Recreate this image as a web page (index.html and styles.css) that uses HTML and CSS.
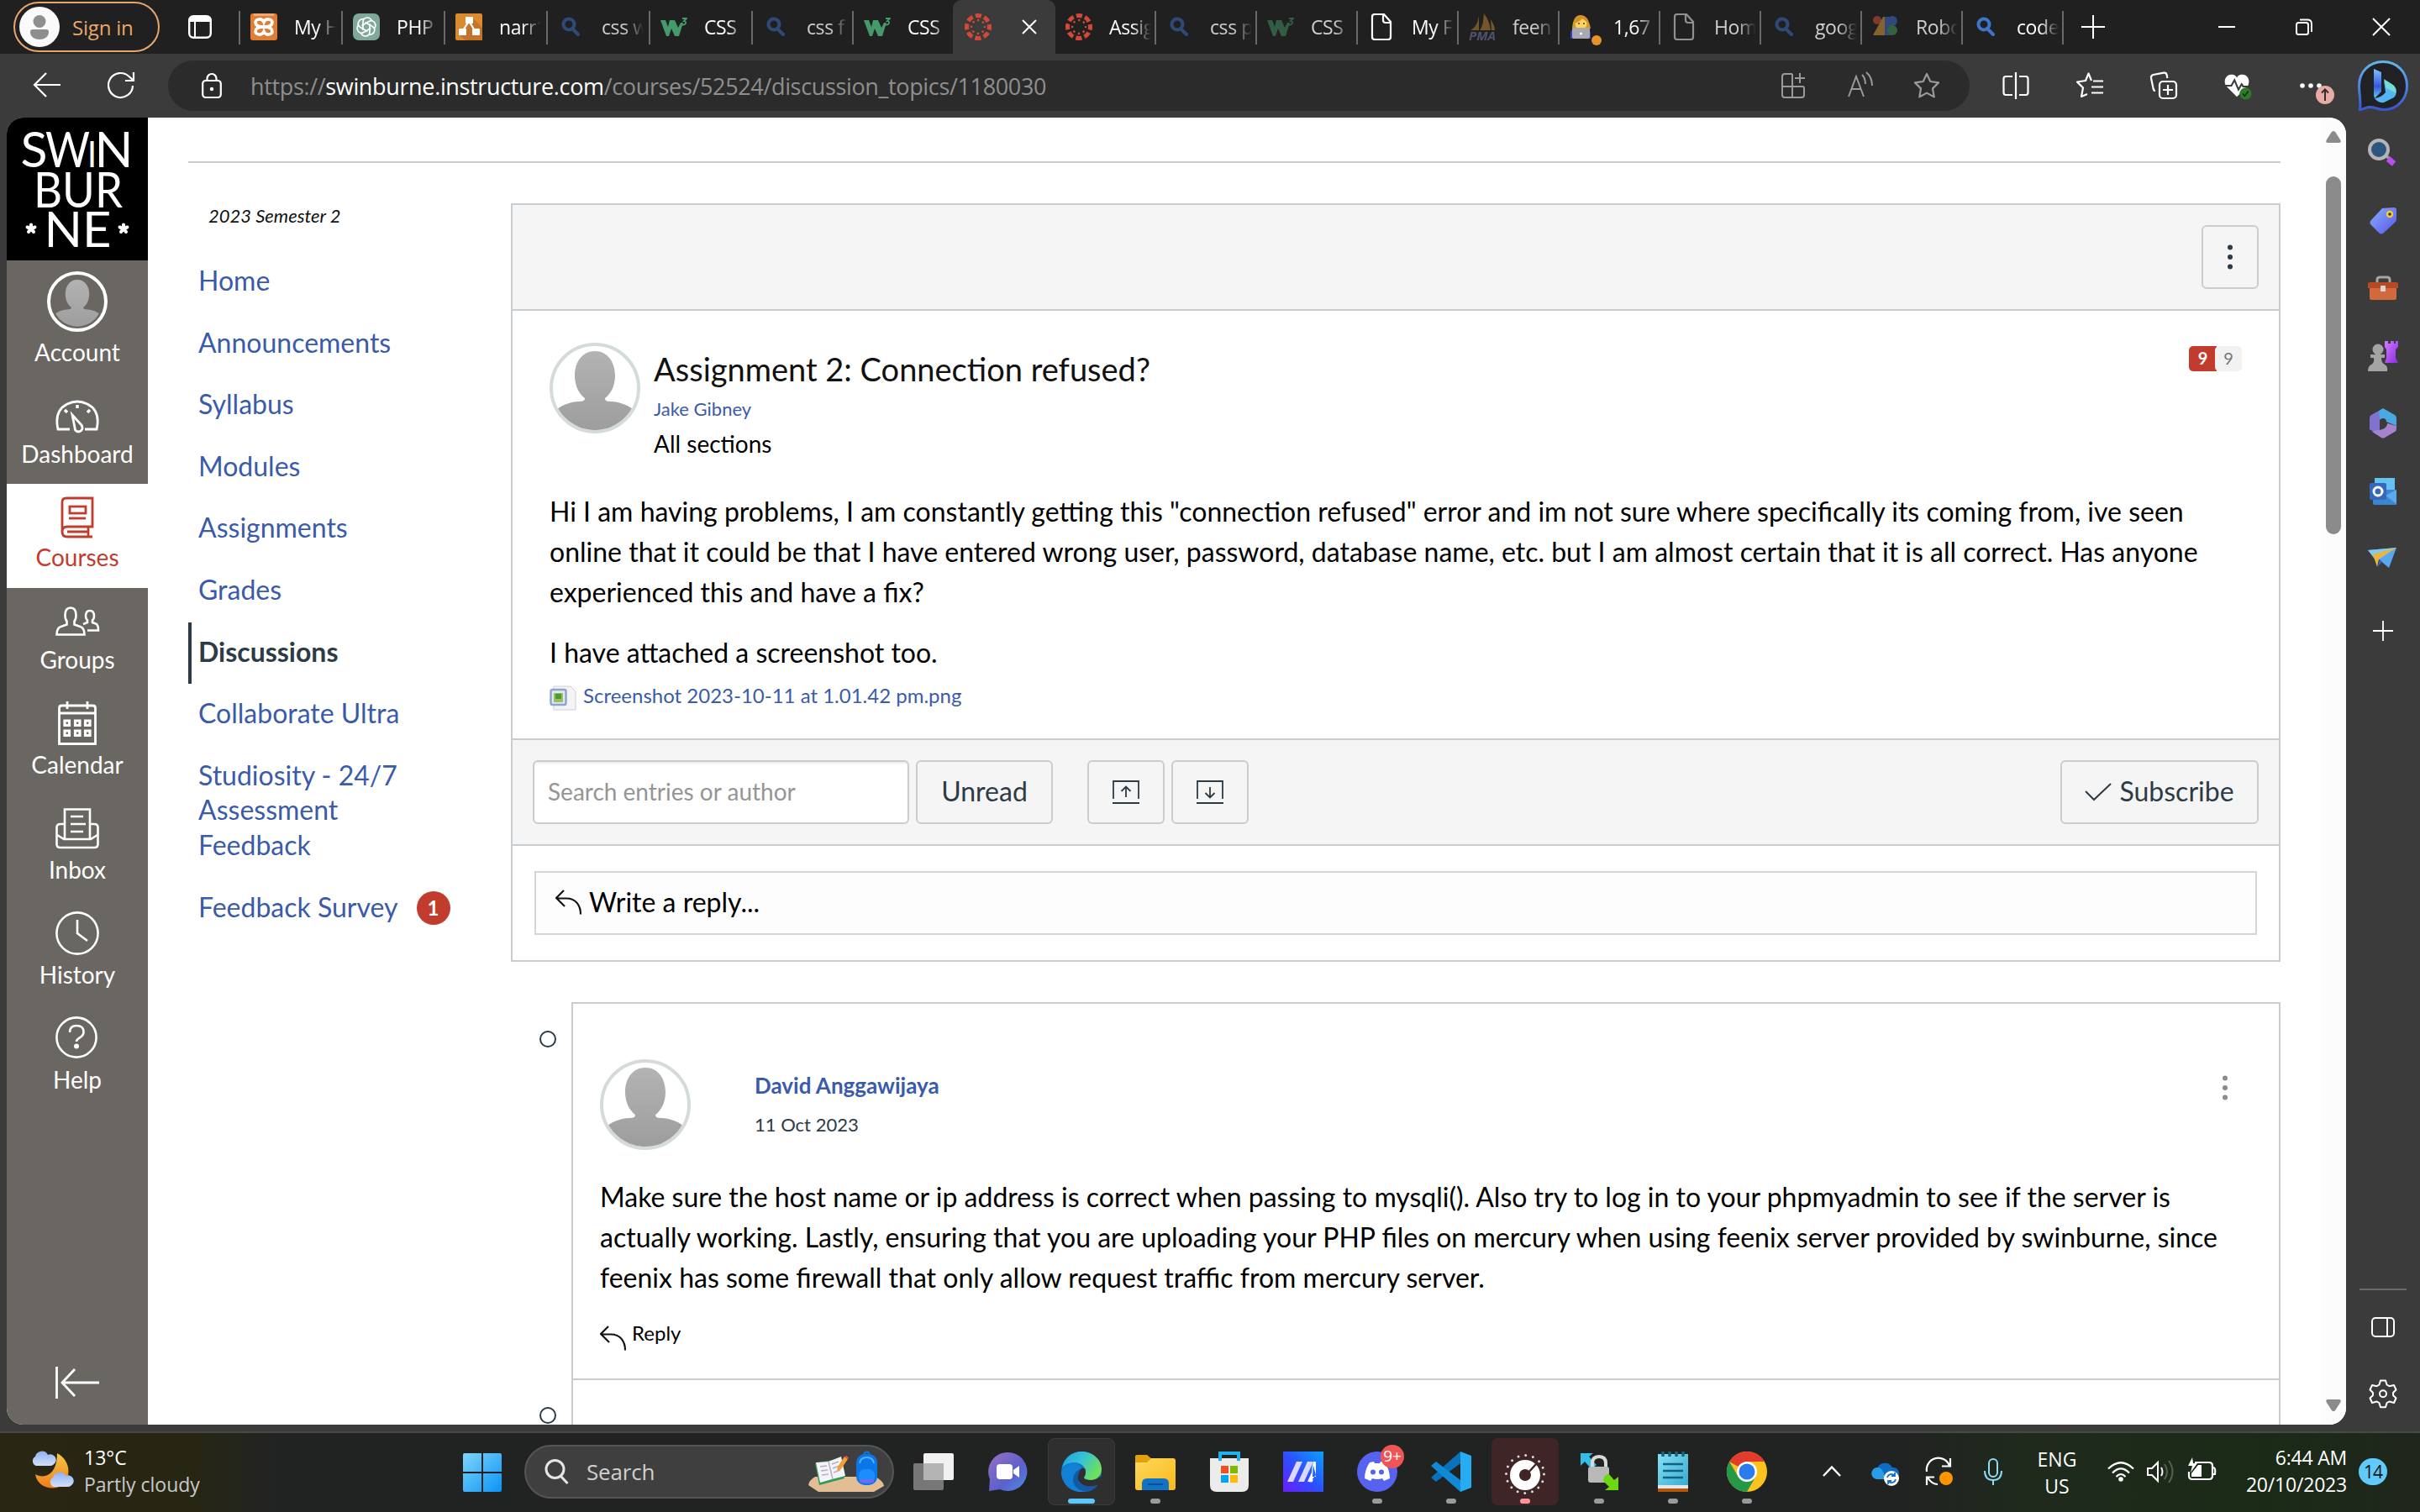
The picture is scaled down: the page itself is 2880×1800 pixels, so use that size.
FILE: index.html
```html
<!DOCTYPE html>
<html lang="en">
<head>
<meta charset="utf-8">
<title>Assignment 2: Connection refused?</title>
<link rel="stylesheet" href="styles.css">
</head>
<body>
<svg class="defs" width="0" height="0">
  <defs>
    <linearGradient id="gPerson" x1="0" y1="0" x2="0" y2="1"><stop offset="0" stop-color="#b3b3b3"/><stop offset="1" stop-color="#9c9c9c"/></linearGradient>
    <linearGradient id="gBlue" x1="0" y1="0" x2="1" y2="1"><stop offset="0" stop-color="#7fd6fb"/><stop offset="1" stop-color="#0a93f5"/></linearGradient>
    <linearGradient id="gBing" x1="0" y1="0" x2="0" y2="1"><stop offset="0" stop-color="#63b5e8"/><stop offset="1" stop-color="#3a56d0"/></linearGradient>
    <linearGradient id="gBingB" x1="0" y1="0" x2="0" y2="1"><stop offset="0" stop-color="#7cc4ff"/><stop offset=".6" stop-color="#3a55e0"/><stop offset="1" stop-color="#5ccff0"/></linearGradient>
    <linearGradient id="gTag" x1="0" y1="0" x2="1" y2="1"><stop offset="0" stop-color="#86b0fb"/><stop offset="1" stop-color="#5a55ec"/></linearGradient>
    <linearGradient id="gPurple" x1="0" y1="0" x2="1" y2="1"><stop offset="0" stop-color="#d479ff"/><stop offset="1" stop-color="#8a2be2"/></linearGradient>
    <linearGradient id="gTeams" x1="0" y1="0" x2="1" y2="1"><stop offset="0" stop-color="#9a6fc4"/><stop offset=".6" stop-color="#5c60cc"/><stop offset="1" stop-color="#4b8fe6"/></linearGradient>
    <linearGradient id="gEdge" x1="0" y1="0" x2="1" y2=".5"><stop offset="0" stop-color="#1d9de0"/><stop offset=".5" stop-color="#35c3d6"/><stop offset="1" stop-color="#6fe05a"/></linearGradient>
    <linearGradient id="gEdge2" x1="0" y1="0" x2="0" y2="1"><stop offset="0" stop-color="#1585d8"/><stop offset="1" stop-color="#0c59a4"/></linearGradient>
    <linearGradient id="gFolder" x1="0" y1="0" x2="1" y2="1"><stop offset="0" stop-color="#ffd95c"/><stop offset="1" stop-color="#f9b81b"/></linearGradient>
    <linearGradient id="gAsus" x1="0" y1="1" x2="1" y2="0"><stop offset="0" stop-color="#6a1cff"/><stop offset=".5" stop-color="#2b51ff"/><stop offset="1" stop-color="#0aa2ff"/></linearGradient>
    <linearGradient id="gMoon" x1="0" y1="0" x2="0" y2="1"><stop offset="0" stop-color="#f6c945"/><stop offset="1" stop-color="#ef7d1a"/></linearGradient>
    <linearGradient id="gCloud" x1="0" y1="0" x2="0" y2="1"><stop offset="0" stop-color="#8fb1f2"/><stop offset="1" stop-color="#d3e0fa"/></linearGradient>
    <linearGradient id="gNote" x1="0" y1="0" x2="1" y2="1"><stop offset="0" stop-color="#86e0f5"/><stop offset="1" stop-color="#34a8cc"/></linearGradient>
    <symbol id="person" viewBox="0 0 108 108">
      <clipPath id="pc"><circle cx="54" cy="54" r="50"/></clipPath>
      <g clip-path="url(#pc)" fill="url(#gPerson)"><path d="M54 10c15 0 24 13 24 29 0 12-5 22-12 27 0 3 2 4 8 4 14 1 26 7 30 16v24H4V86c4-9 16-15 30-16 6 0 8-1 8-4-7-5-12-15-12-27 0-16 9-29 24-29z"/></g>
    </symbol>
    <symbol id="bing-q" viewBox="0 0 32 32"><circle cx="13" cy="13" r="6.5" fill="none" stroke-width="4" stroke="currentColor"/><path d="M17 18l7 7" stroke="currentColor" stroke-width="4" stroke-linecap="round"/></symbol>
    <symbol id="w3" viewBox="0 0 32 32"><path d="M0 8h6l3 8 2-8h6l4 9 3-6 3 0-5 16h-5l-4-9-3 9H7z" fill="#46996a"/><path d="M26 6h5l-3 3c3 0 3 5-2 4.500" fill="none" stroke="#46996a" stroke-width="1.800"/></symbol>
    <symbol id="canvas" viewBox="0 0 32 32">
      <circle cx="16" cy="16" r="13.500" fill="none" stroke="#d24a37" stroke-width="5" stroke-dasharray="7.200 3.400" stroke-dashoffset="3.600"/>
      <circle cx="16" cy="16" r="8" fill="none" stroke="#d24a37" stroke-width="2.400" stroke-dasharray="2.400 3.883" stroke-dashoffset="1.200"/>
    </symbol>
    <symbol id="doc" viewBox="0 0 32 32"><path d="M5 4q0-3 3-3h11l8 9v18q0 3-3 3H8q-3 0-3-3zM18 1v7q0 3 3 3h6" fill="none" stroke="currentColor" stroke-width="2.200"/></symbol>
    <symbol id="reply" viewBox="0 0 32 30"><path d="M10 1L1 10l10 10M1.500 10.500H13c11 0 17 8 17 19" fill="none" stroke="#111" stroke-width="2.200"/></symbol>
  </defs>
</svg>

<header class="tabstrip">
  <div class="signin"><svg viewBox="0 0 48 48" width="48" height="48"><circle cx="24" cy="24" r="24" fill="#fafafa"/><circle cx="24" cy="17.500" r="7.500" fill="#8e8e8e"/><path d="M13 30q0-3 3-3h16q3 0 3 3c0 12-22 12-22 0z" fill="#8e8e8e"/></svg><span>Sign in</span></div>
  <svg class="tabmenu" viewBox="0 0 28 28" width="28" height="28"><rect x="1.200" y="1.200" width="25.600" height="25.600" rx="5" fill="none" stroke="#fff" stroke-width="2.400"/><path d="M1 8V6q0-5 5-5h16q5 0 5 5v2z" fill="#fff"/><path d="M8 8v19" stroke="#fff" stroke-width="2"/></svg>
  <div class="tabs">
    <div class="tab"><svg class="fav" viewBox="0 0 32 32"><rect width="32" height="32" rx="3" fill="#df7d35"/><path d="M4 0h24v3H4z" fill="#eda96f"/><g fill="none" stroke="#fff" stroke-width="3.600"><path d="M16 16c-6 0-10-1.500-10-5.500S14 5 16 10.500C18 5 26 6.500 26 10.500S22 16 16 16z"/><path d="M16 16c-6 0-10 1.500-10 5.500S14 27 16 21.500C18 27 26 25.500 26 21.500S22 16 16 16z"/></g></svg><span>My H</span></div>
    <div class="tab"><svg class="fav" viewBox="0 0 32 32"><rect width="32" height="32" rx="7" fill="#7fa89b"/><g fill="none" stroke="#fff" stroke-width="1.700"><path id="pt" d="M12 20V10.500Q12 5 17 5q4 0 5.500 4"/><use href="#pt" transform="rotate(60 16 16)"/><use href="#pt" transform="rotate(120 16 16)"/><use href="#pt" transform="rotate(180 16 16)"/><use href="#pt" transform="rotate(240 16 16)"/><use href="#pt" transform="rotate(300 16 16)"/></g></svg><span>PHP</span></div>
    <div class="tab"><svg class="fav" viewBox="0 0 32 32"><rect width="32" height="32" rx="2" fill="#da8a30"/><path d="M20 5l12 12v15H12l-8-7 12-12z" fill="#c47428"/><path d="M16 9L8 22M16 9l8 13" stroke="#fff" stroke-width="2.200"/><g fill="#fff"><rect x="12" y="4" width="9" height="8" rx="1"/><rect x="4" y="18" width="9" height="8" rx="1"/><rect x="20" y="18" width="9" height="8" rx="1"/></g></svg><span>narr1</span></div>
    <div class="tab asleep"><svg class="fav q"><use href="#bing-q"/></svg><span>css w</span></div>
    <div class="tab"><svg class="fav"><use href="#w3"/></svg><span>CSS</span></div>
    <div class="tab narrow asleep"><svg class="fav q"><use href="#bing-q"/></svg><span>css f</span></div>
    <div class="tab narrow"><svg class="fav"><use href="#w3"/></svg><span>CSS</span></div>
    <div class="tab active"><svg class="fav"><use href="#canvas"/></svg><svg class="x" viewBox="0 0 18 18"><path d="M1 1l16 16M17 1L1 17" stroke="#fff" stroke-width="2"/></svg></div>
    <div class="tab narrow first"><svg class="fav"><use href="#canvas"/></svg><span>Assig</span></div>
    <div class="tab narrow asleep"><svg class="fav q"><use href="#bing-q"/></svg><span>css p</span></div>
    <div class="tab narrow asleep"><svg class="fav"><use href="#w3"/></svg><span>CSS</span></div>
    <div class="tab narrow"><svg class="fav"><use href="#doc"/></svg><span>My F</span></div>
    <div class="tab narrow asleep"><svg class="fav pma" viewBox="0 0 32 32"><path d="M2 20C9 16 11 10 12 2v18zM13 20C18 13 17 6 18 0c6 8 7 14 8 20zM26 7c4 6 5 10 5 13h-4z" fill="#c98a38"/><text x="0" y="32" font-size="15" font-weight="700" font-style="italic" textLength="32" lengthAdjust="spacingAndGlyphs" fill="#8082b4">PMA</text></svg><span>feen</span></div>
    <div class="tab narrow"><svg class="fav" viewBox="0 0 32 32"><path d="M3 18Q4 2 13 2t12 16z" fill="#d99b2e"/><circle cx="13.500" cy="12" r="7" fill="#fbd65a"/><path d="M5 12Q8 2 14 3q8 0 9 9-4-3-8-6-3 4-10 6z" fill="#d58f2b"/><circle cx="11" cy="12" r="1" fill="#5c3b16"/><circle cx="17" cy="12" r="1" fill="#5c3b16"/><path d="M1 30V22q1-3 5-3h14q5 0 5 4v7z" fill="#3a3cc4"/><rect x="3" y="17" width="21" height="13" rx="2" fill="#a9a9b0"/><circle cx="13.500" cy="24" r="1.500" fill="#fff"/></svg><i class="dot"></i><span>1,67</span></div>
    <div class="tab narrow asleep"><svg class="fav"><use href="#doc"/></svg><span>Hom</span></div>
    <div class="tab narrow asleep"><svg class="fav q"><use href="#bing-q"/></svg><span>goog</span></div>
    <div class="tab narrow asleep"><svg class="fav" viewBox="0 0 32 32"><circle cx="6" cy="8" r="5" fill="#e0533d"/><path d="M13 4h6v22H1z" fill="#e9a63c"/><path d="M15 4h8v22h-8z" fill="#4070d8"/><circle cx="24" cy="9" r="6" fill="#4070d8"/><circle cx="24" cy="20" r="6" fill="#49a35a"/></svg><span>Robo</span></div>
    <div class="tab narrow last"><svg class="fav q"><use href="#bing-q"/></svg><span>code</span></div>
  </div>
  <svg class="newtab" viewBox="0 0 28 28" width="28" height="28"><path d="M14 0v28M0 14h28" stroke="#fff" stroke-width="2"/></svg>
  <div class="winbtns">
    <svg viewBox="0 0 20 20"><path d="M0 10h20" stroke="#fff" stroke-width="2"/></svg>
    <svg viewBox="0 0 20 20"><rect x="1" y="5" width="14" height="14" rx="2.500" fill="none" stroke="#fff" stroke-width="2"/><path d="M5 1.500h9q5 0 5 5V16" fill="none" stroke="#fff" stroke-width="1.800"/></svg>
    <svg viewBox="0 0 20 20"><path d="M0 0l20 20M20 0L0 20" stroke="#fff" stroke-width="2"/></svg>
  </div>
</header>

<div class="toolbar">
  <svg class="back" viewBox="0 0 32 32"><path d="M32 16H1M15 2L1 16l14 14" fill="none" stroke="#fff" stroke-width="2.200"/></svg>
  <svg class="reload" viewBox="0 0 32 32"><path d="M30 16A14.500 14.500 0 1 1 25.500 5l5 4.500M31 0v10H21" fill="none" stroke="#fff" stroke-width="2.200"/></svg>
  <div class="address">
    <svg class="lock" viewBox="0 0 24 30"><rect x="1.200" y="9" width="21.600" height="20" rx="3.500" fill="none" stroke="#fff" stroke-width="2.200"/><path d="M6.500 9V6.500a5.500 5.500 0 0 1 11 0V9" fill="none" stroke="#fff" stroke-width="2.200"/><circle cx="12" cy="19" r="2.200" fill="#fff"/></svg>
    <div class="url"><span class="scheme">https://</span><span class="host">swinburne.instructure.com</span><span class="path">/courses/52524/discussion_topics/1180030</span></div>
    <svg class="apps" viewBox="0 0 30 30"><g fill="none" stroke="#9a9a9a" stroke-width="2"><path d="M14 1H5Q2 1 2 4v22q0 3 3 3h20q3 0 3-3v-8q0-2-2-2H2M14 1v28"/><path d="M23 0v12M17 6h12"/></g></svg>
    <svg class="read" viewBox="0 0 30 32"><g fill="none" stroke="#9a9a9a" stroke-width="2"><path d="M1 29L10 5l9 24M4.500 20h11M17 3q4 4 4 11M22 0q7 6 7 16"/></g></svg>
    <svg class="star" viewBox="0 0 32 32"><path d="M16 2l4.300 9 9.700 1.400-7 7 1.700 10L16 24.600 7.300 29.400l1.700-10-7-7 9.700-1.400z" fill="none" stroke="#9a9a9a" stroke-width="2.200" stroke-linejoin="round"/></svg>
  </div>
  <div class="tools">
    <svg viewBox="0 0 32 32"><path d="M12 5H4Q1.500 5 1.500 8v16Q1.500 27 4 27h8M20 5h8q2.500 0 2.500 3v16q0 3-2.500 3h-8M16 0v32" fill="none" stroke="#fff" stroke-width="2.200"/></svg>
    <svg viewBox="0 0 32 32"><path d="M18 10.500L14.500 2 11 10.500 1 12l7 7-2 10.500 7-3M20 11h12M18 18h14M18 25h14" transform="translate(0 -.500)" fill="none" stroke="#fff" stroke-width="2.200" stroke-linejoin="round"/></svg>
    <svg viewBox="0 0 32 32"><g fill="none" stroke="#fff" stroke-width="2.200"><path d="M6 22Q4 22 3.500 19L1 7q-.500-3 2.500-4L16 .700q3-.500 3.700 2.500l.600 3.800"/><rect x="11" y="11" width="20" height="20" rx="4"/><path d="M21 15v12M15 21h12"/></g></svg>
    <svg viewBox="0 0 34 32"><path d="M16 30L2 16C-2 8 4 1 10 2q4 0 6 4 2-4 6-4c6-1 12 6 8 14z" fill="#fff"/><path d="M0 16h9l4-7 5 12 4-7 2 3h8" fill="none" stroke="#3b3b3b" stroke-width="2.200"/><circle cx="27" cy="26" r="7.500" fill="#2d7a28"/><path d="M23.500 26l2.500 3 4.500-6" fill="none" stroke="#1b1b1b" stroke-width="1.600"/></svg>
    <svg class="more" viewBox="0 0 44 40"><g fill="#fff"><circle cx="3" cy="20" r="2.800"/><circle cx="13" cy="20" r="2.800"/><circle cx="23" cy="20" r="2.800"/></g><circle cx="30" cy="31" r="11" fill="#e8aca6"/><path d="M30 38V25M26 28.500l4-4 4 4" fill="none" stroke="#3b2a2a" stroke-width="2"/></svg>
  </div>
  <svg class="bing" viewBox="0 0 60 60"><path d="M30 1.500C47 1.500 58.500 14 58.500 30S47 58.500 31 58.500c-8 0-12-4-18-3-5 1-7 3-10.500 3C4 50 1.500 40 1.500 30 1.500 14 13 1.500 30 1.500z" fill="#202125" stroke="url(#gBing)" stroke-width="3"/><path d="M19 10l9 4v23l-8 8q-1-2-1-5z" fill="url(#gBingB)"/><path d="M20 45q8-1 13-7l-2-14 10 6c6 4 6 10 2 14L31 50q-7 1-11-5z" fill="#55b5f2"/><path d="M31 22l11 7q5 4 3 10-8-5-11-6z" fill="#75dbd6"/></svg>
</div>

<div class="middle">
  <main class="page">
    <nav class="global">
      <svg class="logo" viewBox="0 0 168 170"><rect width="168" height="170" fill="#000"/><g fill="#fff" font-family="Lato, sans-serif"><text x="16.500" y="59" font-size="58" textLength="32" lengthAdjust="spacingAndGlyphs">S</text><text x="46" y="59" font-size="58" textLength="53" lengthAdjust="spacingAndGlyphs">W</text><text x="96" y="59" font-size="43" textLength="11" lengthAdjust="spacingAndGlyphs">I</text><text x="104.500" y="59" font-size="58" textLength="46" lengthAdjust="spacingAndGlyphs">N</text><text x="32" y="107" font-size="58" textLength="106" lengthAdjust="spacingAndGlyphs">BUR</text><text x="44.500" y="154" font-size="58" textLength="80" lengthAdjust="spacingAndGlyphs">NE</text></g><g stroke="#fff" stroke-width="4" stroke-linecap="round"><path id="fl" d="M29 132v-4.500M29 132l4.500-1.500M29 132l3 4M29 132l-3 4M29 132l-4.500-1.500"/><use href="#fl" x="110"/></g></svg>
      <a class="gitem account"><span class="me"><svg viewBox="0 0 108 108"><use href="#person"/></svg></span><span>Account</span></a>
      <a class="gitem dash"><svg viewBox="0 0 52 52"><g fill="none" stroke="#fff" stroke-width="2.800"><path d="M17 46H3Q-2 24 14 16q12-6 24 0 16 8 11 30H35"/><path d="M20 29l11 12q3 6-3 8-5 0-5-5z"/><path d="M26 17v4M11 23l3 3M41 23l-3 3" stroke-width="3.500"/></g></svg><span>Dashboard</span></a>
      <a class="gitem courses"><svg viewBox="0 0 52 52"><g fill="none" stroke="#c23c2d" stroke-width="2.800"><path d="M8 46V10q0-5 5-5h31v34H14q-6 0-6 6t6 6h30M39 39v11M14 45h24"/><rect x="17" y="15" width="19" height="8"/><path d="M16 29h20"/></g></svg><span>Courses</span></a>
      <a class="gitem"><svg viewBox="0 0 52 52"><g fill="none" stroke="#fff" stroke-width="2.600"><path d="M1.500 45.500q0-8 5-9.500l7-2.500v-4q-2-2-2-7 0-9 6.500-9t6.500 9q0 5-2 7v4l7 2.500q5 1.500 5 9.500z"/><path d="M33 33l5-2v-2.500q-2-2-2-5 0-6.500 5-6.500t5 6.500q0 3-2 5V31l4 1.500q3 1 3 8H38"/></g></svg><span>Groups</span></a>
      <a class="gitem"><svg viewBox="0 0 52 52"><g fill="none" stroke="#fff" stroke-width="2.800"><path d="M4.500 50.500V8q0-3 3-3h37q3 0 3 3v42.500zM4.500 14h43M14 0v9M38 0v9"/><path d="M11 23h5.500v5.500H11zM23.500 23H29v5.500h-5.500zM35.500 23H41v5.500h-5.500zM11 35h5.500v5.500H11zM23.500 35H29v5.500h-5.500zM35.500 35H41v5.500h-5.500z" stroke-width="3.200"/></g></svg><span>Calendar</span></a>
      <a class="gitem"><svg viewBox="0 0 52 52"><g fill="none" stroke="#fff" stroke-width="2.600"><path d="M11 38V3.500h30V38M11 21H6q-4.500 0-4.500 4v20q0 4 4 4h41q4 0 4-4V25q0-4-4.500-4h-5M2 34l8 5h32l8-5M18 12h15M18 21h18M18 30h15"/></g></svg><span>Inbox</span></a>
      <a class="gitem"><svg viewBox="0 0 52 52"><g fill="none" stroke="#fff" stroke-width="2.600"><circle cx="26" cy="26" r="24.600"/><path d="M26 10v16l12 9"/></g></svg><span>History</span></a>
      <a class="gitem"><svg viewBox="0 0 52 52"><g fill="none" stroke="#fff" stroke-width="2.600"><circle cx="25" cy="25" r="23.600"/><path d="M17 19q0-8 8-8 8.500 0 8.500 7.500 0 4-4 6.500-4.500 2.500-4.500 5"/></g><circle cx="25" cy="35.500" r="3" fill="#fff"/></svg><span>Help</span></a>
      <svg class="collapse" viewBox="0 0 52 38"><path d="M1.500 0v38M52 19H8M23 3L8 19l15 16" fill="none" stroke="#fff" stroke-width="2.800"/></svg>
    </nav>

    <div class="content">
      <div class="columns">
        <nav class="coursemenu">
          <p class="term">2023 Semester 2</p>
          <a>Home</a><a>Announcements</a><a>Syllabus</a><a>Modules</a><a>Assignments</a><a>Grades</a>
          <a class="current">Discussions</a><a>Collaborate Ultra</a><a>Studiosity - 24/7<br>Assessment<br>Feedback</a>
          <a class="survey">Feedback Survey <b>1</b></a>
        </nav>
        <section class="thread">
          <article class="topic">
            <div class="topic-actions"><button class="btn kebab"><svg viewBox="0 0 8 30"><g fill="#2d3b45"><circle cx="4" cy="3.500" r="3"/><circle cx="4" cy="15" r="3"/><circle cx="4" cy="26.500" r="3"/></g></svg></button></div>
            <div class="post">
              <div class="post-head">
                <span class="avatar"><svg><use href="#person"/></svg></span>
                <div class="titles"><h1>Assignment 2: Connection refused?</h1><a>Jake Gibney</a><p>All sections</p></div>
                <div class="counts"><b>9</b><span>9</span></div>
              </div>
              <div class="message">
                <p>Hi I am having problems, I am constantly getting this "connection refused" error and im not sure where specifically its coming from, ive seen<br>online that it could be that I have entered wrong user, password, database name, etc. but I am almost certain that it is all correct. Has anyone<br>experienced this and have a fix?</p>
                <p>I have attached a screenshot too.</p>
              </div>
              <div class="file"><svg viewBox="0 0 32 30"><path d="M5 1h20l6 6v22H5z" fill="#f4f4f4" stroke="#d0d0d0"/><rect x="1.500" y="5" width="18" height="18" rx="2" fill="#dfe8f5" stroke="#8ea6cf" stroke-width="2.500"/><path d="M5 9h11v11H5z" fill="#9bbf5d"/><path d="M7 10h7v6H7z" fill="#4e9a2c"/></svg><a>Screenshot 2023-10-11 at 1.01.42 pm.png</a></div>
            </div>
            <div class="filters">
              <div class="search">Search entries or author</div>
              <button class="btn unread">Unread</button>
              <button class="btn fold up"><svg viewBox="0 0 32 28"><path d="M1 22V1h30v21M0 27h32M16 20V8M10.500 13L16 7.500l5.500 5.500" fill="none" stroke="#2d3b45" stroke-width="1.800"/></svg></button>
              <button class="btn fold"><svg viewBox="0 0 32 28"><path d="M1 22V1h30v21M0 27h32M16 8v12M10.500 15l5.500 5.500 5.500-5.500" fill="none" stroke="#2d3b45" stroke-width="1.800"/></svg></button>
              <button class="btn subscribe"><svg viewBox="0 0 32 22"><path d="M1 10l10 10L31 1" fill="none" stroke="#2d3b45" stroke-width="2"/></svg>Subscribe</button>
            </div>
            <div class="respond"><div class="replybox"><svg><use href="#reply"/></svg><span>Write a reply...</span></div></div>
          </article>
          <div class="entries">
            <div class="row"><i class="unread-dot"></i>
              <article class="entry">
                <div class="entry-head"><span class="avatar"><svg><use href="#person"/></svg></span><div class="who"><a>David Anggawijaya</a><time>11 Oct 2023</time></div>
                <svg class="dots" viewBox="0 0 8 30"><g fill="#8b8b8b"><circle cx="4" cy="3.500" r="3"/><circle cx="4" cy="15" r="3"/><circle cx="4" cy="26.500" r="3"/></g></svg></div>
                <p class="text">Make sure the host name or ip address is correct when passing to mysqli(). Also try to log in to your phpmyadmin to see if the server is<br>actually working. Lastly, ensuring that you are uploading your PHP files on mercury when using feenix server provided by swinburne, since<br>feenix has some firewall that only allow request traffic from mercury server.</p>
                <div class="reply"><svg><use href="#reply"/></svg><span>Reply</span></div>
              </article>
            </div>
            <div class="row"><i class="unread-dot"></i><article class="entry next"></article></div>
          </div>
        </section>
      </div>
    </div>
    <div class="scroll">
      <svg viewBox="0 0 18 14"><path d="M9 0q1.500 0 2.500 1.500L17.500 11q1 3-2 3h-13q-3 0-2-3L6.500 1.500Q7.500 0 9 0z" fill="#8b8b8b"/></svg>
      <div class="thumb"></div>
      <svg class="down" viewBox="0 0 18 14"><path d="M9 14q1.500 0 2.500-1.500L17.500 3q1-3-2-3h-13q-3 0-2 3l6 9.500Q7.500 14 9 14z" fill="#8b8b8b"/></svg>
    </div>
  </main>
  <aside class="edgebar">
    <svg viewBox="0 0 36 36"><path d="M22 22l4 3" stroke="#999" stroke-width="4"/><circle cx="13" cy="14" r="11" fill="#2e5580" stroke="#b5b5b5" stroke-width="4"/><path d="M24 25l7 6" stroke="#b94df0" stroke-width="7"/></svg>
    <svg viewBox="0 0 36 36"><path d="M17 3l14-1q3 0 3 3v11q0 2-2 4L19 32q-3 3-6 0l-9-9q-3-3 0-6z" fill="url(#gTag)"/><circle cx="26" cy="10" r="3" fill="#333" stroke="#f2d027" stroke-width="2.400"/></svg>
    <svg viewBox="0 0 36 36"><path d="M11 11V8q0-3 3-3h9q3 0 3 3v3" fill="none" stroke="#a5a5a5" stroke-width="3"/><rect x="2" y="16" width="32" height="16" rx="2" fill="#d1693e"/><path d="M2 11h32q2 0 2 2v5H0v-5q0-2 2-2z" fill="#b84a23"/><rect x="15" y="15" width="6" height="7" rx="1" fill="#d5d5d5"/></svg>
    <svg viewBox="0 0 36 36"><path d="M20 0h4v3h3V0h4v3h2V0h3v7l-3 3v10l3 6H20l2-6V10l-2-3z" fill="url(#gPurple)"/><g fill="#a4a4a4"><circle cx="12" cy="10" r="6.500"/><path d="M3 16h17v4h-4q0 6 4 8 4 2 3 8H0q0-6 4-8 4-2 3-8H3z"/></g></svg>
    <svg viewBox="0 0 36 36"><path d="M18 0L32 8q2 1 2 4v9l-12-5q0-4-4-4-3 0-5 3V3z" fill="#4aa8e2"/><path d="M13 3L4 8q-2 1-2 4v13l6 4 6-3V14z" fill="#8272cf"/><path d="M14 26h-4l-5 2 11 7q2 1 4 0l12-7q2-1 2-4v-3l-11-3q0 6-9 8z" fill="#a683cf"/></svg>
    <svg viewBox="0 0 36 36"><rect x="8" y="2" width="24" height="18" fill="#65c3f2"/><path d="M6 16h28v18H8q-2 0-2-2z" fill="#3c86cf"/><path d="M34 16v17L21 23z" fill="#5aa9e8"/><rect x="2" y="8" width="20" height="20" rx="2" fill="#3568bd"/><circle cx="12" cy="18" r="5" fill="none" stroke="#fff" stroke-width="3"/></svg>
    <svg viewBox="0 0 36 36"><path d="M0 8l34-3-9 24z" fill="#5ba7ee"/><path d="M0 8l34-3L10 21z" fill="#87c8f0"/><path d="M6 13L34 5 13 18l-2 10z" fill="#edb435"/><path d="M11 28l3-9 3 3z" fill="#2e62bd"/></svg>
    <svg class="add" viewBox="0 0 24 24"><path d="M12 0v24M0 12h24" stroke="#fff" stroke-width="1.800"/></svg>
    <hr>
    <svg class="pane" viewBox="0 0 28 24"><rect x="1" y="1" width="26" height="22" rx="4" fill="none" stroke="#fff" stroke-width="2"/><path d="M19 1v22" stroke="#fff" stroke-width="2"/></svg>
    <svg class="gear" viewBox="0 0 32 34"><path d="M13 1.500h6l1.500 5 3 1.700L29 7l2.500 5.500L28 16v3l3.500 3.500L29 28l-5.500-1.500-3 1.700-1.500 5h-6l-1.500-5-3-1.700L3 28 .500 22.500 4 19v-3L.500 12.500 3 7l5.500 1.200 3-1.700z" fill="none" stroke="#fff" stroke-width="2" stroke-linejoin="round"/><circle cx="16" cy="17.300" r="4" fill="none" stroke="#fff" stroke-width="2"/></svg>
  </aside>
</div>

<footer class="taskbar">
  <svg class="weather" viewBox="0 0 50 46"><path d="M31 4c16 8 20 32 0 41-12 2-24-3-26-16 10 6 26 2 26-25z" fill="url(#gMoon)"/><path id="cl" d="M6 19a6 6 0 0 1-1-11A8 8 0 0 1 20 6a6.500 6.500 0 0 1 6 12q-1 1-4 1z" fill="url(#gCloud)"/><use href="#cl" x="21" y="25"/></svg>
  <div class="temp"><span>13°C</span><span class="dim">Partly cloudy</span></div>
  <svg class="start" viewBox="0 0 46 46"><path d="M0 2q0-2 2-2h20v22H0zM24 0h20q2 0 2 2v20H24zM0 24h22v22H2q-2 0-2-2zM24 24h22v20q0 2-2 2H24z" fill="url(#gBlue)"/></svg>
  <div class="tsearch"><svg class="mag" viewBox="0 0 28 30"><circle cx="12.500" cy="12" r="10.500" fill="none" stroke="#e6e6e6" stroke-width="3"/><path d="M19.500 20.500l8 8.500" stroke="#e6e6e6" stroke-width="3"/></svg><span>Search</span>
  <svg class="art" viewBox="0 0 90 48"><path d="M8 30h72q10 6 10 11L78 48H12L0 40q1-6 8-10z" fill="#e3bd94"/><path d="M8 14l5 26 30-8-5-24z" fill="#2f9c54"/><path d="M9 13l15-1 15-6 5 23-16 4-14 4z" fill="#f5f3fa"/><path d="M24 12l5 21M14 18l8-1M15 23l8-1M16 28l8-1M28 15l8-3M29 20l8-3M30 25l8-3" stroke="#b6adc9" stroke-width="1.500"/><path d="M35 18l8-12 4 3-8 12-5 2z" fill="#f2a033"/><path d="M43 6l2-1 3 2-1 2z" fill="#ef4a44"/><rect x="57" y="3" width="25" height="37" rx="10" fill="#0b76ea"/><circle cx="69.500" cy="3.500" r="3" fill="none" stroke="#0b76ea" stroke-width="2"/><path d="M61 14q1-7 8.500-7t8.500 7" fill="none" stroke="#4fb5ff" stroke-width="2"/><rect x="60" y="21" width="19" height="17" rx="7" fill="#1c8dfc"/><path d="M61 35h17" stroke="#8d5cf0" stroke-width="3"/></svg></div>
  <div class="apps-row">
    <div class="app"><svg viewBox="0 0 48 48"><rect x="12" y="2" width="36" height="32" rx="2" fill="#f1f1f1"/><rect x="0" y="14" width="36" height="32" rx="2" fill="#777"/><path d="M12 14h24v20H12z" fill="#b4b4b4"/></svg></div>
    <div class="app"><svg viewBox="0 0 48 48"><path d="M24 1a23 23 0 1 1-9 44L2 47l1-14A23 23 0 0 1 24 1z" fill="url(#gTeams)"/><rect x="11" y="15" width="19" height="18" rx="4" fill="#fff"/><path d="M31 22l7-5v14l-7-5z" fill="#fff"/></svg></div>
    <div class="app on"><svg viewBox="0 0 48 48"><circle cx="24" cy="24" r="24" fill="url(#gEdge2)"/><path d="M1 20C3 8 13 0 24 0c14 0 24 10 24 21 0 8-6 13-13 13-5 0-8-2-8-3 0-1 2-3 2-7 0-6-6-11-13-11C9 13 3 16 1 20z" fill="url(#gEdge)"/><path d="M16 13C5 14 0 22 0 26c1 12 10 22 24 22 3 0 5 0 7-1-10 0-16-8-16-15 0-8 6-11 9-12-2-4-5-7-8-7z" fill="#1280d4"/><path d="M24 20q-5 5-4 12c2 8 12 11 25 3l1 1q-5 10-15 12C20 47 14 41 14 33q0-8 10-13z" fill="#1459a5"/><path d="M24 20q5-1 5 4 0 4-2 7 0 3 9 3 6 0 10-4l3 2v5c-13 8-26 4-29-4q-1-7 4-13z" fill="#2f2f2f"/></svg><b></b></div>
    <div class="app open"><svg viewBox="0 0 48 48"><path d="M0 6q0-2 2-2h12l6 5-6 6H0z" fill="#e0a10c"/><path d="M14 13l5-5h26q3 0 3 3v32q0 3-3 3H3q-3 0-3-3V13z" fill="url(#gFolder)"/><path d="M8 46V38q0-6 6-6h20q6 0 6 6v8z" fill="#1272c4"/><path d="M15 39h18" stroke="#0b4f8d" stroke-width="2"/></svg><b></b></div>
    <div class="app"><svg viewBox="0 0 48 48"><path d="M13 11V2h22v9" fill="none" stroke="#21b2ee" stroke-width="4"/><path d="M1 8h46v32q0 8-8 8H9q-8 0-8-8z" fill="#ececec"/><path d="M11 8h4v3h-4zM33 8h4v3h-4z" fill="#21b2ee"/><path d="M14 17h9v9h-9z" fill="#f25022"/><path d="M25 17h9v9h-9z" fill="#7fba00"/><path d="M14 28h9v9h-9z" fill="#00a4ef"/><path d="M25 28h9v9h-9z" fill="#ffb900"/></svg></div>
    <div class="app"><svg viewBox="0 0 48 48"><rect width="48" height="48" fill="url(#gAsus)"/><path d="M16 12h7L12 36H5zM29 12h7L25 36h-7z" fill="#d9d9ff"/><path d="M36 12h3v18h-4zM35 13l-1 12-5 11h3l7-8z" fill="#fff"/><circle cx="33" cy="34" r="2.500" fill="#fff"/></svg></div>
    <div class="app open"><svg viewBox="0 0 48 48"><circle cx="24" cy="24" r="24" fill="#5663f0"/><path d="M15 13l5-1 1 2h6l1-2 5 1c4 6 6 12 6 19l-7 3-2-3q-6 2-12 0l-2 3-7-3c0-7 2-13 6-19z" fill="#fff"/><circle cx="19" cy="24.500" r="3" fill="#5663f0"/><circle cx="29" cy="24.500" r="3" fill="#5663f0"/></svg><em>9+</em><b></b></div>
    <div class="app open"><svg viewBox="0 0 48 48"><path d="M35 0v14L6 36l-6-5z" fill="#0a72b8"/><path d="M6 12l29 22v14L0 17z" fill="#0f8ad6"/><path d="M35 0l13 5v38l-13 5z" fill="#27abf2"/></svg><b></b></div>
    <div class="app open red"><svg viewBox="0 0 48 48"><circle cx="24" cy="28" r="18" fill="#fff"/><circle cx="24" cy="28" r="7" fill="#402526"/><path d="M26 27L38 14" stroke="#402526" stroke-width="2.500"/><circle cx="24" cy="27" r="22.500" fill="none" stroke="#ddd" stroke-width="3" stroke-linecap="round" stroke-dasharray="0 8.840"/></svg><b></b></div>
    <div class="app open"><svg viewBox="0 0 48 48"><path d="M2 2h15l-5 4 9 10-6 5-8-9-5 5z" fill="#35bfe8"/><path d="M16 20V14q0-8 8-8t8 8v6" fill="none" stroke="#d9d9d9" stroke-width="4"/><rect x="11" y="18" width="25" height="19" rx="3" fill="#b9b9b9"/><path d="M30 30l5-4 7 8 5-4v16H31l5-4-7-7z" fill="#6bd812"/></svg><b></b></div>
    <div class="app open"><svg viewBox="0 0 48 48"><path d="M6 3h36v42H6z" fill="url(#gNote)"/><path d="M6 40h36v5H6z" fill="#e7e7e7"/><path d="M6 44h36v4H6z" fill="#b5560d"/><path d="M12 0v6M20 0v6M28 0v6M36 0v6" stroke="#14647f" stroke-width="3.500"/><path d="M12 15h24M12 23h24M12 31h24" stroke="#0c6484" stroke-width="2.500"/></svg><b></b></div>
    <div class="app open"><svg viewBox="0 0 48 48"><circle cx="24" cy="24" r="24" fill="#fcc31e"/><path d="M24 24L3.200 12A24 24 0 0 1 44.800 12H24z" fill="#e33b2e"/><path d="M3.200 12A24 24 0 0 0 24 48l10.400-18L24 24 13.600 30z" fill="#249a48"/><circle cx="24" cy="24" r="12" fill="#fff"/><circle cx="24" cy="24" r="9.500" fill="#2a7bee"/></svg><b></b></div>
  </div>
  <div class="tray">
    <svg class="chev" viewBox="0 0 22 13"><path d="M1 12L11 1.500 21 12" fill="none" stroke="#fff" stroke-width="2.400"/></svg>
    <svg class="cloud" viewBox="0 0 34 30"><path d="M7 21a7 7 0 0 1 0-13 10 10 0 0 1 18-1 7 7 0 0 1 2 14z" fill="#0f6cc4"/><path d="M7 21a7 7 0 1 1 6-11l5 11z" fill="#2a9de8"/><circle cx="24" cy="20" r="9" fill="#fff"/><path d="M19 19a5 5 0 0 1 9-2M29 21a5 5 0 0 1-9 2M28 13v4h-4M20 27v-4h4" fill="none" stroke="#1b6fc2" stroke-width="1.800"/></svg>
    <svg class="sync" viewBox="0 0 32 32"><path d="M1 16A14 14 0 0 1 28 9M29 0v9.500H19M1 32V22.500h9M2 23q5 8 12 8" fill="none" stroke="#fff" stroke-width="2.200"/><circle cx="24" cy="24" r="8" fill="#ff9500"/></svg>
    <svg class="mic" viewBox="0 0 22 32"><rect x="6" y="1" width="10" height="21" rx="5" fill="none" stroke="#8fdcf5" stroke-width="2"/><path d="M1 15q0 11 10 11t10-11M11 26v6" fill="none" stroke="#8fdcf5" stroke-width="2"/></svg>
    <div class="lang"><span>ENG</span><span>US</span></div>
    <svg class="wifi" viewBox="0 0 32 24"><g fill="none" stroke="#fff" stroke-width="2.200"><path d="M1 8.500Q16-6 31 8.500M6 13.500Q16 3.500 26 13.500M10.500 18Q16 12 21.500 18"/></g><circle cx="16" cy="21" r="2.800" fill="#fff"/></svg>
    <svg class="vol" viewBox="0 0 33 28"><path d="M1 10h5l7-7v22l-7-7H1z" fill="none" stroke="#fff" stroke-width="2"/><path d="M17 9q3 5 0 10" fill="none" stroke="#fff" stroke-width="2"/><path d="M21 5q6 9 0 18M26 1q9 13 0 26" fill="none" stroke="#566153" stroke-width="2"/></svg>
    <svg class="batt" viewBox="0 0 34 28"><path d="M9 6h17q4 0 4 4v12q0 4-4 4H6q-4 0-4-4v-5M31 12q3 0 2 8h-2" fill="none" stroke="#fff" stroke-width="2.200"/><path d="M5 23V19l8-10h4v14z" fill="#fff"/><path d="M6 0L1 10h5l-2 8 8-11H7z" fill="#fff"/></svg>
    <div class="clock"><span>6:44 AM</span><span>20/10/2023</span></div>
    <span class="notif">14</span>
  </div>
</footer>
</body>
</html>
```
FILE: styles.css
```css
* { box-sizing: border-box; }
body {
  margin: 0;
  width: 2880px;
  height: 1800px;
  overflow: hidden;
  display: flex;
  flex-direction: column;
  background: #3b3b3b;
  font-family: "Open Sans", "Noto Sans", sans-serif;
}
p, h1 { margin: 0; font-weight: 400; }
svg { display: block; flex: none; overflow: visible; }
.defs { position: absolute; }

/* tab strip */
.tabstrip {
  height: 64px;
  flex: none;
  display: flex;
  background: #202020;
  color: #fff;
  font-size: 24px;
}
.signin {
  margin: 2px 0 0 16px;
  width: 174px;
  height: 60px;
  padding-left: 5px;
  border: 2px solid #e8a76b;
  border-radius: 30px;
  display: flex;
  align-items: center;
  color: #e8a76b;
}
.signin span { margin-left: 15px; font-size: 24px; letter-spacing: -.2px; white-space: nowrap; }
.tabmenu { margin: 18px 32px 0 34px; }
.tabs { display: flex; width: 2172px; }
.tab {
  width: 122px;
  height: 64px;
  flex: none;
  display: flex;
  align-items: center;
  position: relative;
  padding-left: 14px;
}
.tab.narrow { width: 120px; }
.tab::before {
  content: "";
  position: absolute;
  left: 0;
  top: 13px;
  height: 40px;
  width: 2px;
  background: #696969;
}
.tab.active::before, .tab.first::before { display: none; }
.tab.last::after {
  content: "";
  position: absolute;
  right: -2px;
  top: 13px;
  height: 40px;
  width: 2px;
  background: #696969;
}
.fav { width: 32px; height: 32px; }
.fav.q { color: #3d74cc; }
.asleep .fav { opacity: .5; }
.tab span {
  margin-left: 20px;
  width: 50px;
  overflow: hidden;
  white-space: nowrap;
  font-size: 23px;
  letter-spacing: -.4px;
  -webkit-mask-image: linear-gradient(90deg, #000 55%, transparent);
  mask-image: linear-gradient(90deg, #000 55%, transparent);
}
.asleep span { color: #cfcfcf; }
.tab.active { background: #3b3b3b; border-radius: 10px 10px 0 0; margin-right: -2px; }
.tab .x { width: 18px; height: 18px; margin-left: 36px; }
.tab .dot {
  position: absolute;
  left: 40px;
  top: 42px;
  width: 12px;
  height: 12px;
  border-radius: 50%;
  background: #e8912d;
}
.newtab { margin: 18px 0 0 21px; }
.winbtns { display: flex; gap: 72px; margin: 22px 0 0 135px; }
.winbtns svg { width: 20px; height: 20px; }

/* toolbar */
.toolbar { height: 76px; flex: none; display: flex; padding-top: 8px; }
.back { width: 32px; height: 32px; margin: 13px 0 0 40px; }
.reload { width: 32px; height: 32px; margin: 14px 0 0 56px; }
.address {
  width: 2144px;
  height: 60px;
  margin-left: 40px;
  padding-left: 40px;
  border-radius: 30px;
  background: #2b2b2b;
  display: flex;
  align-items: center;
}
.lock { width: 24px; height: 30px; }
.url { margin-left: 34px; width: 1821px; font-size: 27px; white-space: nowrap; color: #8f8f8f; letter-spacing: -.35px; }
.host { color: #fff; }
.apps { width: 30px; height: 30px; }
.read { width: 30px; height: 32px; margin-left: 50px; }
.star { width: 32px; height: 32px; margin-left: 48px; }
.tools { display: flex; gap: 56px; margin: 14px 0 0 39px; }
.tools svg { width: 32px; height: 32px; }
.tools .more { width: 44px; height: 40px; margin: -4px 0 0 2px; }
.bing { width: 60px; height: 60px; margin-left: 25px; }

/* page frame */
.middle { height: 1564px; flex: none; display: flex; }
.page {
  margin-left: 8px;
  width: 2784px;
  height: 1556px;
  border-radius: 20px;
  overflow: hidden;
  background: #fff;
  display: flex;
  font-family: Lato, "Open Sans", sans-serif;
}

/* global navigation */
.global { width: 168px; background: #6a6662; display: flex; flex-direction: column; flex: none; }
.logo { width: 168px; height: 170px; }
.gitem {
  height: 125px;
  flex: none;
  padding-top: 10px;
  display: flex;
  flex-direction: column;
  align-items: center;
  gap: 6px;
  color: #fff;
  font-size: 28px;
  line-height: 34px;
}
.gitem > svg { width: 52px; height: 52px; }
.gitem.account { height: 132px; padding-top: 13px; gap: 7px; }
.me { width: 72px; height: 72px; border: 4px solid #fff; border-radius: 50%; }
.me svg { width: 64px; height: 64px; }
.gitem.dash { height: 134px; padding-top: 23px; }
.gitem.courses { height: 124px; padding-top: 12px; background: #fff; color: #c23c2d; }
.collapse { width: 52px; height: 38px; margin: auto 0 31px 58px; }

/* content */
.content { width: 2490px; margin: 52px 0 0 48px; flex: none; }
.columns { border-top: 2px solid #c7cdd1; padding-top: 48px; display: flex; }
.coursemenu { width: 384px; flex: none; display: flex; flex-direction: column; }
.term { margin: 1px 0 28px 24px; font-size: 22px; line-height: 28px; font-style: italic; color: #111; }
.coursemenu a {
  padding: 14px 0 18px 8px;
  border-left: 4px solid transparent;
  font-size: 32px;
  line-height: 41.6px;
  color: #3a5ba9;
}
.coursemenu .current { border-color: #2d3b45; color: #2d3b45; font-weight: 700; }
.survey { display: flex; align-items: center; white-space: nowrap; }
.survey b {
  margin: 2px 0 -2px 22px;
  width: 40px;
  height: 40px;
  border-radius: 50%;
  background: #c23c2d;
  color: #fff;
  font-size: 24px;
  line-height: 39px;
  text-align: center;
}

/* topic */
.thread { flex: 1; }
.topic { border: 2px solid #c7cdd1; }
.topic-actions { height: 126px; background: #f5f5f5; border-bottom: 2px solid #c7cdd1; display: flex; justify-content: flex-end; padding: 24px 24px 0 0; }
.btn {
  height: 76px;
  border: 2px solid #c7cdd1;
  border-radius: 6px;
  background: #f5f5f5;
  color: #2d3b45;
  font: 32px Lato, sans-serif;
  padding: 0;
  display: flex;
  align-items: center;
  justify-content: center;
}
.kebab { width: 68px; }
.kebab svg { width: 8px; height: 30px; }
.post { height: 509px; padding: 38px 44px 0; }
.post-head { height: 138px; display: flex; }
.avatar { width: 108px; height: 108px; flex: none; border: 4px solid #d5dbdb; border-radius: 50%; }
.avatar svg { width: 108px; height: 108px; margin: -4px; }
.titles { margin: 9px 0 0 16px; }
.titles h1 { font-size: 38px; line-height: 44px; color: #111; }
.titles a { display: block; margin-top: 12px; font-size: 22px; line-height: 28px; color: #3a5ba9; }
.titles p { margin-top: 10px; font-size: 28px; line-height: 34px; color: #000; }
.counts { margin: 4px 0 0 auto; display: flex; height: 30px; font-size: 20px; line-height: 28px; text-align: center; }
.counts b { width: 33px; background: #c23c2d; color: #fff; border-radius: 5px 0 0 5px; }
.counts span { width: 32px; margin-left: -2px; background: #f2f2f2; color: #777; border-radius: 5px; }
.message { margin-top: 39px; font-size: 32px; line-height: 48px; color: #000; white-space: nowrap; }
.message p + p { margin-top: 24px; }
.file { margin-top: 9px; display: flex; align-items: center; gap: 8px; font-size: 24px; line-height: 34px; color: #3a5ba9; }
.file svg { width: 32px; height: 30px; margin-top: 6px; }
.filters { height: 128px; border: solid #c7cdd1; border-width: 2px 0; background: #f5f5f5; padding: 0 24px; display: flex; align-items: center; }
.search {
  width: 448px;
  height: 76px;
  border: 2px solid #c7cdd1;
  border-radius: 6px;
  background: #fff;
  padding-left: 16px;
  font-size: 28px;
  line-height: 70px;
  color: #959595;
  box-shadow: inset 0 2px 2px rgba(0,0,0,.075);
}
.unread { width: 163px; margin-left: 8px; padding-bottom: 4px; }
.fold { width: 92px; margin-left: 8px; }
.fold.up { margin-left: 41px; }
.fold svg { width: 32px; height: 28px; }
.subscribe { width: 236px; margin-left: auto; gap: 9px; padding-bottom: 4px; }
.subscribe svg { width: 32px; height: 22px; margin-top: 4px; }
.respond { height: 136px; padding: 30px 26px 0; }
.replybox { height: 76px; border: 2px solid #d3d5d6; background: #fdfdfd; display: flex; align-items: center; gap: 8px; padding: 0 0 4px 23px; font-size: 32px; color: #000; }
.replybox svg { margin-top: 2px; }
.replybox svg, .reply svg { width: 32px; height: 30px; }

/* entries */
.entries { margin-top: 48px; }
.row { display: flex; }
.unread-dot { width: 20px; height: 20px; margin: 34px 18px 0 34px; flex: none; border: 2px solid #2d3b45; border-radius: 50%; }
.entry { flex: 1; height: 448px; border: 2px solid #c7cdd1; border-bottom: 0; padding: 66px 32px 0; }
.entry.next { height: 120px; }
.entry-head { display: flex; height: 140px; }
.who { margin: 14px 0 0 76px; display: flex; flex-direction: column; }
.who a { font-size: 26px; line-height: 34px; font-weight: 700; color: #3a5ba9; }
.who time { margin-top: 15px; font-size: 22px; line-height: 30px; color: #2d3b45; }
.dots { width: 8px; height: 30px; margin: 19px 28px 0 auto; }
.text { font-size: 32px; line-height: 48px; color: #000; white-space: nowrap; }
.reply { margin-top: 27px; display: flex; gap: 6px; font-size: 24px; line-height: 30px; }
.reply svg { margin-top: 6px; }

/* page scrollbar */
.scroll { width: 30px; margin-left: auto; background: #fcfcfc; display: flex; flex-direction: column; align-items: center; padding: 16px 0 16px; }
.scroll svg { width: 18px; height: 14px; }
.thumb { width: 18px; height: 426px; margin-top: 40px; border-radius: 9px; background: #8b8b8b; }
.scroll .down { margin-top: auto; }

/* browser side bar */
.edgebar { width: 88px; padding-top: 24px; display: flex; flex-direction: column; align-items: center; gap: 44.500px; }
.edgebar svg { width: 36px; height: 36px; }
.edgebar .add { width: 24px; height: 24px; margin-top: 11px; }
.edgebar hr { width: 56px; height: 2px; border: 0; background: #6a6a6a; margin: 727px 0 0; }
.edgebar .pane { width: 28px; height: 24px; margin-top: -13px; }
.edgebar .gear { width: 32px; height: 34px; margin-top: 6px; }

/* taskbar */
.taskbar {
  height: 96px;
  flex: none;
  border-top: 2px solid #474a44;
  display: flex;
  background: linear-gradient(90deg, #292613 0, #272613 230px, #212323 330px, #212222 2250px, #1f2a1c 2420px, #1b2a17 2700px, #1f261c 2880px);
  color: #fff;
  font-size: 23px;
  white-space: nowrap;
}
.weather { width: 50px; height: 46px; margin: 20px 0 0 37px; }
.temp { width: 451px; margin: 13px 0 0 13px; display: flex; flex-direction: column; line-height: 32px; }
.dim { color: #c9c9c9; }
.start { width: 46px; height: 46px; margin-top: 24px; }
.tsearch {
  width: 440px;
  height: 64px;
  margin: 14px 0 0 27px;
  border: 2px solid #555;
  border-radius: 32px;
  background: #3f3f3f;
  display: flex;
  align-items: center;
  padding-left: 22px;
  color: #d0d0d0;
  font-size: 26px;
  letter-spacing: -.2px;
}
.mag { width: 28px; height: 30px; }
.tsearch span { margin-left: 22px; width: 264px; }
.art { width: 90px; height: 48px; }
.apps-row { display: flex; gap: 8px; margin: 6px 0 0 7px; }
.app { width: 80px; height: 80px; border-radius: 8px; position: relative; padding: 16px; }
.app > svg { width: 48px; height: 48px; }
.app.on { background: #2f2f2f; border: 1px solid #3b3b3b; padding: 15px; }
.app.red { background: #402526; }
.app b { position: absolute; left: 34px; bottom: 2px; width: 12px; height: 6px; border-radius: 3px; background: #9a9a9a; }
.app.on b { left: 23px; bottom: 1px; width: 32px; background: #5ec6fb; }
.app.red b { background: #ff949c; }
.app em { position: absolute; right: 8px; top: 8px; width: 28px; height: 28px; border-radius: 50%; background: #f05555; font-size: 19px; line-height: 27px; font-style: normal; text-align: center; }
.tray { display: flex; }
.chev { width: 22px; height: 13px; margin: 39px 0 0 50px; }
.cloud { width: 34px; height: 30px; margin: 34px 0 0 36px; }
.sync { width: 32px; height: 32px; margin: 30px 0 0 31px; }
.mic { width: 22px; height: 32px; margin: 30px 0 0 37px; }
.lang { width: 60px; margin: 15px 0 0 35px; line-height: 32px; text-align: center; display: flex; flex-direction: column; }
.wifi { width: 32px; height: 24px; margin: 34px 0 0 30px; }
.vol { width: 33px; height: 28px; margin: 32px 0 0 15px; }
.batt { width: 34px; height: 28px; margin: 29px 0 0 15px; }
.clock { width: 156px; margin: 13px 0 0; text-align: right; line-height: 32px; display: flex; flex-direction: column; letter-spacing: -.2px; }
.notif { width: 34px; height: 32px; margin: 30px 0 0 14px; border-radius: 16px; background: #60cbfb; color: #111; font-size: 21px; line-height: 32px; text-align: center; letter-spacing: -1px; }
```
